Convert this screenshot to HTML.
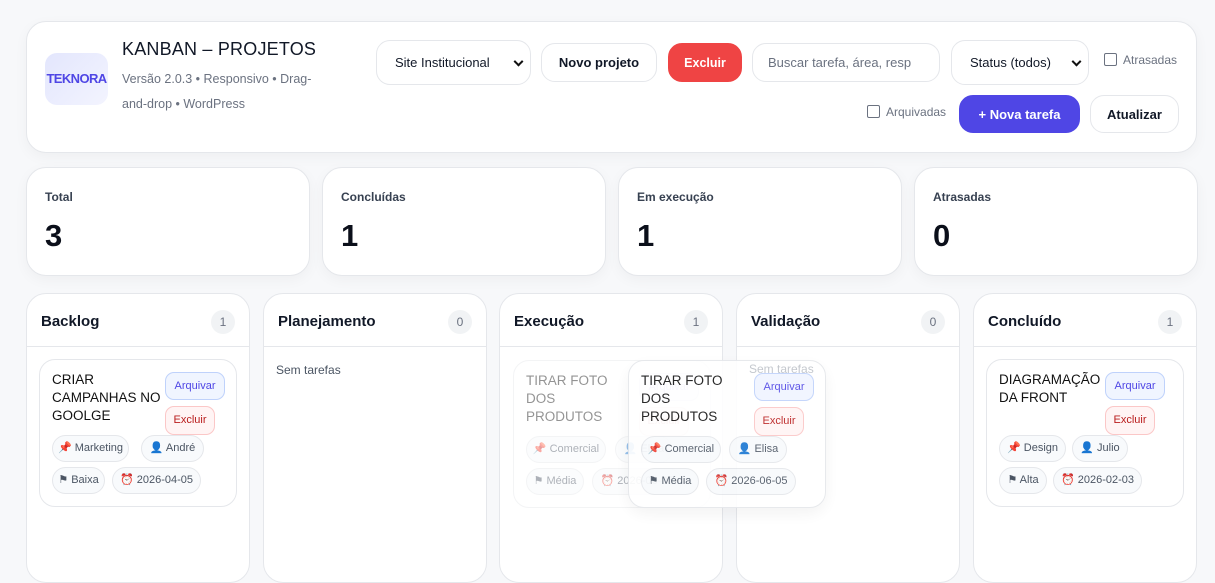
<!DOCTYPE html>
<html><head><meta charset="utf-8"><style>
*{box-sizing:border-box;margin:0;padding:0}
body{width:1215px;height:566px;overflow:hidden;background:#f7f8fa;font-family:"Liberation Sans","DejaVu Sans",sans-serif;color:#111827;position:relative}
.a{position:absolute}
.box{position:absolute;background:#fff;border:1px solid #e5e7eb;border-radius:20px;box-shadow:0 4px 14px rgba(0,0,0,.04)}
.btn{position:absolute;border:1px solid #e5e7eb;border-radius:14px;background:#fff;font-size:13px;display:flex;align-items:center;justify-content:center}
.cb{position:absolute;width:13px;height:13px;border:1px solid #6b7280;border-radius:2px;background:#fff}
.lbl{position:absolute;font-size:12px;color:#6b7280}
.sl{font-size:12px;font-weight:bold;color:#374151;position:absolute;left:18px;top:22px}
.num{font-size:31px;font-weight:bold;position:absolute;left:18px;top:50px;color:#0b0f1a}
.col{position:absolute;top:293px;height:290px;width:224px;background:#fff;border:1px solid #e5e7eb;border-radius:20px}
.ch{height:53px;border-bottom:1px solid #e5e7eb;position:relative}
.ct{position:absolute;left:14px;top:19px;font-size:15px;font-weight:bold}
.cnt{position:absolute;right:14px;top:16px;width:24px;height:24px;border-radius:12px;background:#f1f3f5;color:#6b7280;font-size:12px;text-align:center;line-height:24px}
.card{position:absolute;width:198px;height:148px;background:#fff;border:1px solid #e5e7eb;border-radius:16px}
.tt{position:absolute;left:12px;top:11px;font-size:13.5px;line-height:18px;width:115px;color:#111;white-space:nowrap}
.ar{position:absolute;left:125px;top:12px;width:60px;height:28px;border:1px solid #bfd2fb;background:#f0f5ff;color:#4f46e5;font-size:11px;border-radius:9px;text-align:center;line-height:26px}
.ex{position:absolute;left:125px;top:46px;width:50px;height:29px;border:1px solid #fbc7c7;background:#fff4f4;color:#b91c1c;font-size:11px;border-radius:9px;text-align:center;line-height:27px}
.chip{position:absolute;height:27px;border:1px solid #e5e7eb;background:#f8fafc;border-radius:14px;font-size:11px;color:#4b5563;line-height:25px;text-align:center;white-space:nowrap;overflow:hidden}
.arr{position:absolute;right:5px;top:50%;width:7px;height:7px;border-right:2px solid #111;border-bottom:2px solid #111;transform:translateY(-70%) rotate(45deg)}
</style></head><body>

<div class="box" style="left:26px;top:21px;width:1171px;height:132px"></div>
<div class="a" style="left:45px;top:53px;width:63px;height:52px;border-radius:12px;background:linear-gradient(135deg,#e3e6fd,#f3f4fe);color:#4f46e5;font-weight:bold;font-size:13px;letter-spacing:-.6px;text-align:center;line-height:52px">TEKNORA</div>
<div class="a" style="left:122px;top:39px;font-size:18px;letter-spacing:.2px">KANBAN – PROJETOS</div>
<div class="a" style="left:122px;top:67px;width:218px;font-size:12.5px;line-height:25px;color:#6b7280">Versão 2.0.3 • Responsivo • Drag-<br>and-drop • WordPress</div>

<div class="btn" style="left:376px;top:40px;width:155px;height:45px;justify-content:flex-start;padding-left:18px">Site Institucional<span class="arr" style="right:8px"></span></div>
<div class="btn" style="left:541px;top:43px;width:116px;height:39px;font-weight:bold">Novo projeto</div>
<div class="btn" style="left:668px;top:43px;width:74px;height:39px;background:#ef4444;border-color:#ef4444;color:#fff;font-weight:bold;font-size:12.5px">Excluir</div>
<div class="btn" style="left:752px;top:43px;width:188px;height:39px;justify-content:flex-start;padding-left:15px;color:#6b7280">Buscar tarefa, área, resp</div>
<div class="btn" style="left:951px;top:40px;width:138px;height:45px;justify-content:flex-start;padding-left:18px">Status (todos)<span class="arr" style="right:8px"></span></div>
<div class="cb" style="left:1104px;top:53px"></div><div class="lbl" style="left:1123px;top:53px">Atrasadas</div>
<div class="cb" style="left:867px;top:105px"></div><div class="lbl" style="left:886px;top:105px">Arquivadas</div>
<div class="btn" style="left:959px;top:95px;width:121px;height:38px;background:#4f46e5;border-color:#4f46e5;color:#fff;font-weight:bold">+ Nova tarefa</div>
<div class="btn" style="left:1090px;top:95px;width:89px;height:38px;font-weight:bold">Atualizar</div>

<div class="box" style="left:26px;top:167px;width:284px;height:109px"><div class="sl">Total</div><div class="num">3</div></div>
<div class="box" style="left:322px;top:167px;width:284px;height:109px"><div class="sl">Concluídas</div><div class="num">1</div></div>
<div class="box" style="left:618px;top:167px;width:284px;height:109px"><div class="sl">Em execução</div><div class="num">1</div></div>
<div class="box" style="left:914px;top:167px;width:284px;height:109px"><div class="sl">Atrasadas</div><div class="num">0</div></div>

<div class="col" style="left:26px"><div class="ch"><div class="ct">Backlog</div><div class="cnt">1</div></div>
<div class="card" style="left:12px;top:65px"><div class="tt">CRIAR<br>CAMPANHAS NO<br>GOOLGE</div><div class="ar">Arquivar</div><div class="ex">Excluir</div>
<div class="chip" style="left:12px;top:75px;width:77px">📌 Marketing</div><div class="chip" style="left:101px;top:75px;width:63px">👤 André</div>
<div class="chip" style="left:12px;top:107px;width:53px">⚑ Baixa</div><div class="chip" style="left:72px;top:107px;width:89px">⏰ 2026-04-05</div></div></div>

<div class="col" style="left:263px"><div class="ch"><div class="ct">Planejamento</div><div class="cnt">0</div></div><div class="a" style="left:12px;top:69px;font-size:12px;color:#4b5563">Sem tarefas</div></div>

<div class="col" style="left:499px"><div class="ch"><div class="ct">Execução</div><div class="cnt">1</div></div>
<div class="card" style="left:13px;top:66px;opacity:.45"><div class="tt">TIRAR FOTO<br>DOS<br>PRODUTOS</div><div class="ar">Arquivar</div><div class="ex">Excluir</div>
<div class="chip" style="left:12px;top:75px;width:80px">📌 Comercial</div><div class="chip" style="left:101px;top:75px;width:58px">👤 Elisa</div>
<div class="chip" style="left:12px;top:107px;width:58px">⚑ Média</div><div class="chip" style="left:78px;top:107px;width:90px">⏰ 2026-06-05</div></div></div>

<div class="col" style="left:736px"><div class="ch"><div class="ct">Validação</div><div class="cnt">0</div></div></div>

<div class="col" style="left:973px"><div class="ch"><div class="ct">Concluído</div><div class="cnt">1</div></div>
<div class="card" style="left:12px;top:65px"><div class="tt">DIAGRAMAÇÃO<br>DA FRONT</div><div class="ar" style="left:118px">Arquivar</div><div class="ex" style="left:118px">Excluir</div>
<div class="chip" style="left:12px;top:75px;width:67px">📌 Design</div><div class="chip" style="left:85px;top:75px;width:56px">👤 Julio</div>
<div class="chip" style="left:12px;top:107px;width:48px">⚑ Alta</div><div class="chip" style="left:66px;top:107px;width:89px">⏰ 2026-02-03</div></div></div>

<div class="card" style="left:628px;top:360px;opacity:.9;box-shadow:0 6px 18px rgba(0,0,0,.06)"><div class="tt">TIRAR FOTO<br>DOS<br>PRODUTOS</div><div class="ar">Arquivar</div><div class="ex">Excluir</div>
<div class="chip" style="left:12px;top:75px;width:80px">📌 Comercial</div><div class="chip" style="left:100px;top:75px;width:58px">👤 Elisa</div>
<div class="chip" style="left:12px;top:107px;width:58px">⚑ Média</div><div class="chip" style="left:77px;top:107px;width:90px">⏰ 2026-06-05</div></div>
<div class="a" style="left:749px;top:362px;font-size:12px;color:#c4c8ce">Sem tarefas</div>
</body></html>
